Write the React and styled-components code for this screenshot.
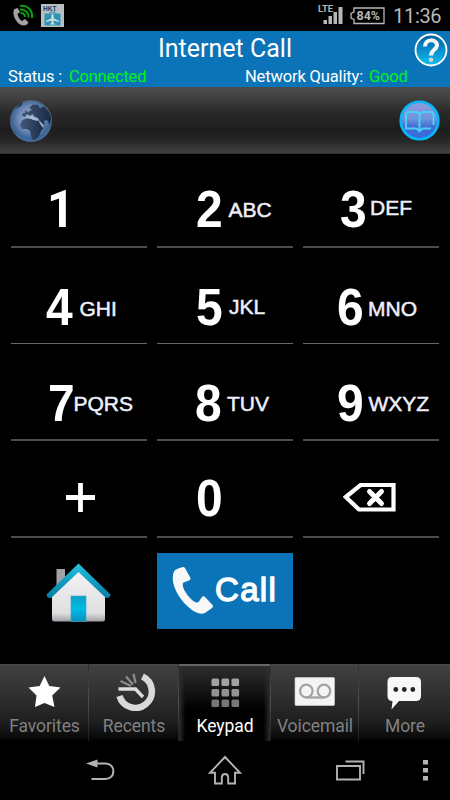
import React, { useState } from 'react'
import styled, { createGlobalStyle } from 'styled-components'

const keys = [
    { digit: '1', x: 36, y: 30 },
    { digit: '2', letters: 'ABC', x: 39, y: 30, lx: 71.5, ly: 45 },
    { digit: '3', letters: 'DEF', x: 37, y: 30, lx: 67, ly: 43 },
    { digit: '4', letters: 'GHI', x: 35, y: 34, lx: 68.5, ly: 50 },
    { digit: '5', letters: 'JKL', x: 39, y: 34, lx: 72, ly: 48 },
    { digit: '6', letters: 'MNO', x: 34, y: 34, lx: 65, ly: 50 },
    { digit: '7', letters: 'PQRS', x: 37, y: 34, lx: 62.5, ly: 49 },
    { digit: '8', letters: 'TUV', x: 38, y: 34, lx: 70, ly: 49 },
    { digit: '9', letters: 'WXYZ', x: 34, y: 34, lx: 65.5, ly: 49 },
    { icon: 'plus', x: 55, y: 42 },
    { digit: '0', x: 39, y: 32 },
    { icon: 'delete', x: 40, y: 41 },
]

const tabs = ['Favorites', 'Recents', 'Keypad', 'Voicemail', 'More']

const App = () => {
    const [active, setActive] = useState('Keypad');
    return (
        <>
            <GlobalStyle />
            <Phone>
                <StatusBar>
                    <CallIcon />
                    <RoamingIcon />
                    <SignalIcon />
                    <BatteryIcon />
                    <Clock>11:36</Clock>
                </StatusBar>
                <Header>
                    <Title>Internet Call</Title>
                    <HelpButton><HelpIcon /></HelpButton>
                    <StatusRow>
                        <Label $width="61px">Status :</Label>
                        <Value $width="176px">Connected</Value>
                        <Label $width="124px">Network Quality:</Label>
                        <Value>Good</Value>
                    </StatusRow>
                </Header>
                <NumberBar>
                    <GlobeIcon />
                    <BookIcon />
                </NumberBar>
                <Keypad>
                    {keys.map((key, i) => (
                        <Key key={i} $line={i > 2 && i < 6 ? 1 : 2}>
                            {key.digit && <Digit $x={key.x} $y={key.y} $plain={key.digit === '1'}>{key.digit}</Digit>}
                            {key.letters && <Letters $x={key.lx - key.x - 28} $y={key.ly}>{key.letters}</Letters>}
                            {key.icon && <KeyIcon $x={key.x} $y={key.y}>{key.icon === 'plus' ? <PlusIcon /> : <DeleteIcon />}</KeyIcon>}
                        </Key>
                    ))}
                    <HomeButton><HouseIcon /></HomeButton>
                    <CallButton>
                        <HandsetIcon />
                        <CallText>Call</CallText>
                    </CallButton>
                </Keypad>
                <TabBar>
                    {tabs.map(tab => (
                        <Tab key={tab} $active={tab === active} onClick={() => setActive(tab)}>
                            <TabIcon name={tab} />
                            <TabLabel>{tab}</TabLabel>
                        </Tab>
                    ))}
                </TabBar>
                <NavBar>
                    <BackIcon />
                    <NavHomeIcon />
                    <WindowsIcon />
                    <DotsIcon />
                </NavBar>
            </Phone>
        </>
    )
}

export default App

const CallIcon = () => (
    <svg width="22" height="24" viewBox="0 0 22 24">
        <path d="M2.500 5 C-.5 9 3 17 8 20.500 C12 22.500 15 21.500 16.500 18.500 L13 15 L10 17 C8 16 6 13 5.500 10 L8 8 L5.500 4 Z" fill="#a3a3a3" />
        <g fill="none" stroke="#0a9d13" strokeWidth="2">
            <path d="M8 2 C15 .5 21 6 20 14" />
            <path d="M8 5.500 C13 5 17 9 16.500 13.500" />
            <path d="M8.500 9 C11 9 13 10.500 13 13" />
        </g>
    </svg>
)

const RoamingIcon = () => (
    <Roaming width="23" height="23" viewBox="0 0 23 23">
        <rect width="23" height="23" fill="#b9bfc1" />
        <text x="2" y="7" fontSize="7.500" fontWeight="700" fontFamily="Liberation Sans, sans-serif" fill="#123a68" textLength="13.500" lengthAdjust="spacingAndGlyphs">HKT</text>
        <rect x="3.500" y="9.500" width="16" height="12" fill="#2c94b4" />
        <path d="M9 9.500 V8 H14 V9.500" fill="none" stroke="#2c94b4" />
        <path d="M11.500 10 L12.600 11 V14.300 L18 17 V18 L12.500 16.500 V19 L14.500 20.500 H8.500 L10.500 19 V16.500 L5 18 V17 L10.400 14.300 V11 Z" fill="#d4dfe2" />
    </Roaming>
)

const SignalIcon = () => (
    <Signal width="26" height="21" viewBox="0 0 26 21">
        <text x="0" y="7.800" fontSize="9.500" fontWeight="700" fontFamily="Roboto, sans-serif" fill="#b8b8b8" textLength="15" lengthAdjust="spacingAndGlyphs">LTE</text>
        <path d="M5.500 20 V16 H9 V20 Z M10.500 20 V12 H14 V20 Z M15.500 20 V8 H19 V20 Z M20.500 20 V3 H24.500 V20 Z" fill="#b8b8b8" />
    </Signal>
)

const BatteryIcon = () => (
    <Battery width="35" height="18" viewBox="0 0 35 18">
        <path d="M4 1 H34 V16.500 H4 V12.500 L1 11 V6.500 L4 5 Z" fill="none" stroke="#b8b8b8" strokeWidth="1.300" />
        <text x="6.500" y="13.300" fontSize="12.500" fontWeight="700" fontFamily="Roboto, sans-serif" fill="#b8b8b8" textLength="23.500" lengthAdjust="spacingAndGlyphs">84%</text>
    </Battery>
)

const HelpIcon = () => (
    <svg width="34" height="34" viewBox="0 0 34 34">
        <defs>
            <linearGradient id="help" x1="0" y1="0" x2="0" y2="1">
                <stop offset="0" stopColor="#045b98" />
                <stop offset=".4" stopColor="#0784c4" />
                <stop offset="1" stopColor="#12c0ee" />
            </linearGradient>
        </defs>
        <circle cx="17" cy="17" r="15.500" fill="url(#help)" stroke="#fff" strokeWidth="1.800" />
        <path d="M11 13.500 C10.500 5.500 23.500 5.500 23 12.500 C22.600 17 17 16.800 17 22.500" fill="none" stroke="#f5f5f5" strokeWidth="4" />
        <circle cx="17" cy="26.800" r="2.300" fill="#d2d2d2" />
    </svg>
)

const GlobeIcon = () => (
    <svg width="42" height="42" viewBox="0 0 42 42">
        <defs>
            <radialGradient id="globe" cx=".5" cy=".45" r=".55">
                <stop offset="0" stopColor="#a8bbd8" />
                <stop offset=".55" stopColor="#6f8cb5" />
                <stop offset=".85" stopColor="#3d6497" />
                <stop offset="1" stopColor="#3c72b2" />
            </radialGradient>
            <linearGradient id="land" x1="0" x2="1">
                <stop offset="0" stopColor="#44597a" />
                <stop offset="1" stopColor="#182942" />
            </linearGradient>
        </defs>
        <circle cx="21" cy="21" r="20.700" fill="url(#globe)" stroke="#5b6674" strokeWidth=".6" />
        <g fill="url(#land)">
            <path d="M12.500 20 L16 18.500 L21 18.500 L23 20 L29 21 L32 26 L35 26.500 L31 31 L29 36 L25 40 L22 39.500 L20 31 L17 29 L12 29 L10 25 Z" />
            <path d="M12 16 L12.500 13 L15 13 L15 10 L18 12 L22 9.500 L19 8 L23 4.500 L28 5 L30 8 L34 6.500 L39 12 L41 18 L40 25 L37 20 L34 21 L35 25 L30 22 L28 18 L24 17 L23 14 L20 16 L17 14 L15 17 Z" />
            <path d="M4 10 L9 4 L13 2 L11 6 L7 8 Z M2 29 L6 32 L7 35 Z" />
        </g>
        <path d="M16 17 L22 15.500 L28 18.500 L27 20.500 L21 19 Z M30 21 L34 27 L33 28 L29 22 Z" fill="#a8b9d5" />
    </svg>
)

const BookIcon = () => (
    <svg width="41" height="41" viewBox="0 0 41 41">
        <defs>
            <linearGradient id="book" x1="0" y1="0" x2="0" y2="1">
                <stop offset="0" stopColor="#929bd9" />
                <stop offset=".45" stopColor="#6e95dd" />
                <stop offset=".65" stopColor="#416bd1" />
                <stop offset="1" stopColor="#356be0" />
            </linearGradient>
        </defs>
        <circle cx="20.500" cy="20.500" r="18.800" fill="url(#book)" stroke="#08b7f7" strokeWidth="2.600" />
        <g fill="none" stroke="#70a0e6" opacity=".45">
            <circle cx="20.500" cy="22" r="4" />
            <circle cx="20.500" cy="22" r="8" />
        </g>
        <path d="M20.500 31 L17 28.500 H7 V14.500 Q7 12 10 12 H16 Q20 12 20.500 15 Q21 12 25 12 H31 Q34.500 12 34.500 14.500 V25 M20.500 15 V31 L24 28.500 H32" fill="none" stroke="#4dcef8" strokeWidth="2" />
    </svg>
)

const PlusIcon = () => (
    <svg width="29" height="29" viewBox="0 0 29 29">
        <path d="M14.500 0 V29 M0 14.500 H29" stroke="#fff" strokeWidth="4.800" />
    </svg>
)

const DeleteIcon = () => (
    <svg width="54" height="30" viewBox="0 0 54 30">
        <path d="M2.800 15 L17.500 3 H50.500 V27.500 H16 Z" fill="none" stroke="#fff" strokeWidth="4.200" />
        <path d="M26.500 9.500 L38.500 21.500 M38.500 9.500 L26.500 21.500" stroke="#fff" strokeWidth="5" strokeLinecap="round" />
    </svg>
)

const HouseIcon = () => (
    <svg width="66" height="60" viewBox="0 0 66 60">
        <defs>
            <linearGradient id="roof" x1="0" y1="0" x2="0" y2="1">
                <stop offset="0" stopColor="#28c3df" />
                <stop offset=".55" stopColor="#109cc1" />
                <stop offset="1" stopColor="#077da6" />
            </linearGradient>
            <linearGradient id="wall" x1="0" y1="0" x2="0" y2="1">
                <stop offset="0" stopColor="#f4f4f5" />
                <stop offset=".84" stopColor="#dedfe1" />
                <stop offset="1" stopColor="#9fa0a4" />
            </linearGradient>
            <linearGradient id="door" x1="0" y1="0" x2="0" y2="1">
                <stop offset="0" stopColor="#0b9fc4" />
                <stop offset=".5" stopColor="#00bce7" />
                <stop offset="1" stopColor="#078fbc" />
            </linearGradient>
        </defs>
        <rect x="10.500" y="6" width="8.500" height="18" fill="#a3a2a6" />
        <path d="M32.500 6 L6 31 V56 Q6 58.500 8.500 58.500 H56.500 Q59 58.500 59 56 V31 Z" fill="url(#wall)" />
        <path d="M32.500 .5 L64.500 31.500 Q64 35.500 60 35 L32.500 9 L5 35 Q1 35.500 .5 31.500 Z" fill="url(#roof)" />
        <rect x="25" y="33" width="15" height="25.500" fill="url(#door)" stroke="#36a8c5" strokeWidth=".6" />
    </svg>
)

const HandsetIcon = () => (
    <Handset width="42" height="49" viewBox="0 0 42 49">
        <path d="M10.500 1 Q12 .5 13 2 L18.500 12 Q19 13.500 17 14.500 L11.500 16.500 Q9.500 19 12.500 24.500 Q18 34 24 36.500 Q26.500 37 28 34 L30 31 Q31.500 29.500 33 31 L40.500 39 Q41.500 40.500 40 42 L33 47 Q28 49.500 20 44 C8 35.500 -1 19 1 10 Q1 4.500 5 3 Z" fill="#f8f8f8" />
    </Handset>
)

const TabIcon = ({ name }) => (
    <TabSvg width="46" height="46" viewBox="0 0 46 46">
        {name === 'Favorites' && (
            <path d="M23.500 11 L28.300 21 L39.500 22.500 L31.200 30.500 L33.500 42 L23.500 38 L14 42 L15.500 30.500 L7.500 22.500 L18.700 21 Z" fill="#fff" />
        )}
        {name === 'Recents' && (
            <>
                <path d="M31.500 11.500 A16.500 16.500 0 1 1 8.500 31" fill="none" stroke="#d9d9d9" strokeWidth="6.500" />
                <path d="M7.500 24 H24.500 L32 32" fill="none" stroke="#dedede" strokeWidth="3.300" />
                <path d="M9.500 16 L20 21 M15 11.500 L22 19.500 M22.500 9 L24.500 18" stroke="#8c8c8c" strokeWidth="2.300" />
            </>
        )}
        {name === 'Keypad' && [13.500, 24, 34.500].map((y, i) => [9.500, 19.500, 29.500].map(x => (
            <rect key={x + y} x={x} y={y} width="7.600" height="7.600" rx="1.500" fill={['#a2a2a2', '#929292', '#777'][i]} />
        )))}
        {name === 'Voicemail' && (
            <>
                <rect x="3" y="12.500" width="39.500" height="28" rx="1" fill="#f4f4f4" stroke="#c9c9c9" strokeWidth=".7" />
                <g fill="none" stroke="#a3a3a3" strokeWidth="2.300">
                    <circle cx="14.300" cy="26" r="6.300" />
                    <circle cx="32" cy="26" r="6.300" />
                    <path d="M14 32.500 H32" />
                </g>
            </>
        )}
        {name === 'More' && (
            <>
                <path d="M10 12 H34 Q39 12 39 17 V31 Q39 36 34 36 H17 L9.500 44.500 L10.500 36 Q5.500 36 5.500 31 V17 Q5.500 12 10 12 Z" fill="#f8f8f8" />
                <g fill="#252525">
                    <circle cx="13.800" cy="24.500" r="2.400" />
                    <circle cx="22.300" cy="24.500" r="2.400" />
                    <circle cx="30.800" cy="24.500" r="2.400" />
                </g>
            </>
        )}
    </TabSvg>
)

const BackIcon = () => (
    <svg width="29" height="22" viewBox="0 0 29 22">
        <path d="M9 4.500 H19.500 C30 4.500 30 20 19.500 20 H5.500" fill="none" stroke="#b3b3b3" strokeWidth="2" />
        <path d="M0 4.500 L11.500 .5 V8.500 Z" fill="#b3b3b3" />
    </svg>
)

const NavHomeIcon = () => (
    <svg width="34" height="30" viewBox="0 0 34 30">
        <path d="M17 2 L32 17.800 H27 V28.500 H20.200 V22.500 Q20 19 17 19 Q14 19 13.800 22.500 V28.500 H7 V17.800 H2 Z" fill="none" stroke="#b3b3b3" strokeWidth="1.900" />
    </svg>
)

const WindowsIcon = () => (
    <svg width="29" height="21" viewBox="0 0 29 21">
        <path d="M1 6 H24 V19.500 H1 Z M9.500 1.500 H27.500 V14" fill="none" stroke="#b3b3b3" strokeWidth="1.900" />
    </svg>
)

const DotsIcon = () => (
    <svg width="5" height="21" viewBox="0 0 5 21">
        <path d="M0 0 H5 V4.500 H0 Z M0 8 H5 V12.500 H0 Z M0 16 H5 V20.500 H0 Z" fill="#b3b3b3" />
    </svg>
)

const GlobalStyle = createGlobalStyle`
    body{
        margin:0;
        background:#000;
    }
    * {
        box-sizing:border-box;
    }
    svg{
        display:block;
        flex:none;
    }
    button{
        padding:0;
        border:none;
        background:none;
        color:inherit;
        font-family:inherit;
        cursor:pointer;
    }
`
const Phone = styled.div`
    display:flex;
    flex-direction:column;
    width:450px;
    height:800px;
    overflow:hidden;
    background:#000;
    color:#fff;
    font-family:Roboto, sans-serif;
`
const StatusBar = styled.div`
    display:flex;
    align-items:flex-start;
    height:31px;
    padding:4px 8px 0 12px;
`
const Roaming = styled.svg`
    margin-left:7px;
`
const Signal = styled.svg`
    margin-left:auto;
`
const Battery = styled.svg`
    margin:3px 0 0 6px;
`
const Clock = styled.div`
    width:49px;
    margin-left:8px;
    font-size:20px;
    line-height:25px;
    letter-spacing:-.3px;
    color:#b8b8b8;
    white-space:nowrap;
`
const Header = styled.header`
    position:relative;
    height:56px;
    background:#0b73b7;
`
const Title = styled.h1`
    margin:0;
    padding-top:3px;
    font-size:25px;
    font-weight:400;
    line-height:30px;
    text-align:center;
`
const HelpButton = styled.button`
    position:absolute;
    top:2px;
    right:2px;
`
const StatusRow = styled.div`
    display:flex;
    padding-left:8px;
    font-size:16.5px;
    line-height:26px;
    white-space:nowrap;
`
const Label = styled.span`
    width:${({ $width }) => $width};
    letter-spacing:-.15px;
`
const Value = styled.span`
    width:${({ $width }) => $width};
    letter-spacing:-.22px;
    color:#00f516;
`
const NumberBar = styled.div`
    display:flex;
    justify-content:space-between;
    height:67px;
    padding:13px 10px 0 10px;
    background:linear-gradient(#4d4d4d, #404040 16%, #292929 38%, #1d1d1d 65%, #262626 80%, #404040 98%, #222);
`
const Keypad = styled.main`
    display:grid;
    grid-template-columns:repeat(3, 136px);
    grid-template-rows:94px 96px 97px 97px 126px;
    column-gap:10px;
    height:510px;
    padding:0 11px;
`
const Key = styled.button`
    display:flex;
    align-items:flex-start;
    border-bottom:${({ $line }) => $line}px solid ${({ $line }) => $line === 1 ? '#686868' : '#4c4c4c'};
    font-family:"Liberation Sans", sans-serif;
    white-space:nowrap;
`
const Digit = styled.span`
    width:28px;
    margin:${({ $x, $y }) => `${$y}px 0 0 ${$x}px`};
    font-family:${({ $plain }) => $plain ? 'Roboto, sans-serif' : 'inherit'};
    font-size:51px;
    font-weight:700;
    line-height:51px;
    transform:scaleX(.94);
    transform-origin:left;
`
const Letters = styled.span`
    margin:${({ $x, $y }) => `${$y}px 0 0 ${$x}px`};
    font-size:21px;
    line-height:21px;
    color:#eeeffa;
    -webkit-text-stroke:.5px #eeeffa;
`
const KeyIcon = styled.span`
    margin:${({ $x, $y }) => `${$y}px 0 0 ${$x}px`};
`
const HomeButton = styled.button`
    display:flex;
    align-items:flex-start;
    padding:25px 0 0 35px;
`
const CallButton = styled.button`
    display:flex;
    align-items:flex-start;
    height:76px;
    margin-top:15px;
    background:#0b73b7;
`
const Handset = styled.svg`
    margin:13px 0 0 15px;
`
const CallText = styled.span`
    margin:20px 0 0 1px;
    font-family:"Liberation Sans", sans-serif;
    font-size:33px;
    line-height:34px;
    letter-spacing:1.3px;
    -webkit-text-stroke:1.3px #fff;
`
const TabBar = styled.nav`
    display:grid;
    grid-template-columns:89px 90px 92px 88px 91px;
    height:76px;
    background:linear-gradient(#484848 0, #404040 3%, #303030 40%, #1d1d1d 78%, #080808 98%, #000);
`
const Tab = styled.button`
    display:flex;
    flex-direction:column;
    align-items:center;
    border-right:1px solid;
    border-image:linear-gradient(#303030, #505050 50%, #181818) 1;
    border-width:0 1px 0 0;
    background:${({ $active }) => $active ? `
        linear-gradient(#666 2px, transparent 2px),
        linear-gradient(90deg, #2c2c2c, transparent 7%, transparent 93%, #2c2c2c),
        linear-gradient(#303030, #1c1c1c 25%, #000 60%)` : 'none'};
    color:${({ $active }) => $active ? '#fff' : '#818181'};
    &:last-child{
        border:none;
    }
`
const TabSvg = styled.svg`
    margin-top:1px;
`
const TabLabel = styled.span`
    padding-left:1px;
    font-size:17.5px;
    line-height:30px;
    letter-spacing:-.08px;
`
const NavBar = styled.div`
    display:flex;
    align-items:center;
    height:60px;
    padding:0 22px 0 86px;
    svg:nth-child(2){
        margin-left:93px;
    }
    svg:nth-child(3){
        margin-left:94px;
    }
    svg:nth-child(4){
        margin-left:auto;
    }
`
